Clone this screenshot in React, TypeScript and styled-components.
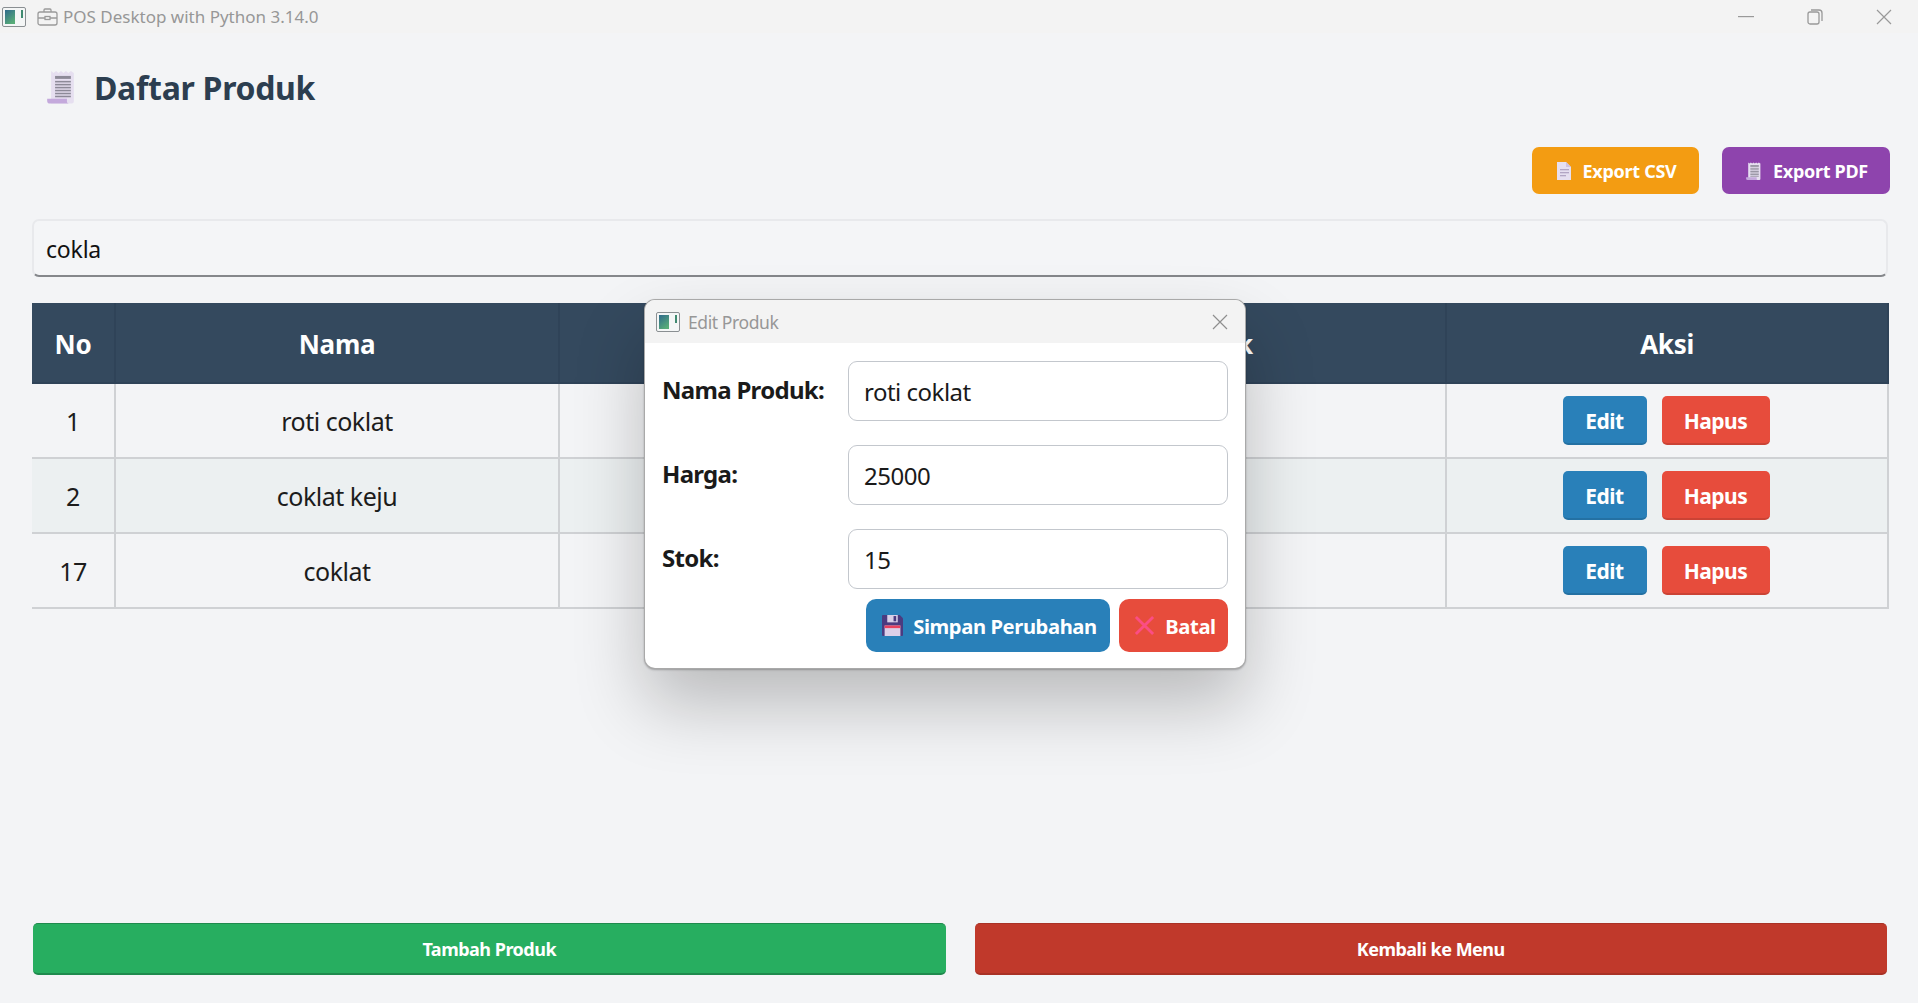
import styled, { createGlobalStyle } from 'styled-components'

const GlobalStyle = createGlobalStyle`
  html, body {
    margin: 0;
    padding: 0;
    background: #f3f4f6;
    overflow: hidden;
  }
  * {
    box-sizing: border-box;
  }
  body {
    font-family: 'Noto Sans', 'Open Sans', sans-serif;
  }
`

const products = [
  { no: 1, name: 'roti coklat', price: '25000', stock: '15' },
  { no: 2, name: 'coklat keju', price: '', stock: '' },
  { no: 17, name: 'coklat', price: '', stock: '' },
]

const fields = [
  { label: 'Nama Produk:', value: 'roti coklat' },
  { label: 'Harga:', value: '25000' },
  { label: 'Stok:', value: '15' },
]

const AppIcon = () => (
  <svg width="24" height="20" viewBox="0 0 24 20">
    <rect x="0.5" y="0.5" width="23" height="19" rx="1.5" fill="#f4f6f6" stroke="#8a8f92" />
    <defs>
      <linearGradient id="appfill" x1="0" y1="0" x2="0.6" y2="1">
        <stop offset="0" stopColor="#2f6a8c" />
        <stop offset="1" stopColor="#58ac78" />
      </linearGradient>
    </defs>
    <rect x="3" y="3" width="10" height="14" fill="url(#appfill)" />
    <rect x="19" y="3" width="2" height="8" fill="#3f8a70" />
  </svg>
)

const BriefcaseIcon = () => (
  <svg width="21" height="18" viewBox="0 0 21 18" fill="none" stroke="#9a9a9a" strokeWidth="1.3">
    <rect x="1" y="4" width="19" height="13" rx="2" />
    <path d="M7 4V2a1 1 0 0 1 1-1h5a1 1 0 0 1 1 1v2" />
    <path d="M1 10h7M13 10h7" />
    <rect x="8" y="8.5" width="5" height="3" />
  </svg>
)

const ScrollIcon = ({ size }: { size: number }) => (
  <svg width={size} height={size * 1.2} viewBox="0 0 28 34">
    <path
      d="M4 1l2.5 2L9 1l2.5 2L14 1l2.5 2L19 1l2.5 2L24 1l3 2v29a2 2 0 0 1-2 2H4z"
      fill="#e6dff0"
    />
    <path d="M0 29h20v3a2 2 0 0 0 2 2H3a3 3 0 0 1-3-3z" fill="#c4a9dc" />
    <g fill="#8d8a98">
      <rect x="8" y="6" width="16" height="3" />
      <rect x="8" y="11" width="16" height="1.6" />
      <rect x="8" y="14" width="16" height="1.6" />
      <rect x="8" y="17" width="16" height="1.6" />
      <rect x="8" y="20" width="16" height="1.6" />
      <rect x="8" y="23" width="16" height="1.6" />
      <rect x="8" y="26" width="16" height="1.6" />
    </g>
  </svg>
)

const PageIcon = () => (
  <svg width="14" height="18" viewBox="0 0 14 18">
    <path d="M0 0h9l5 5v13H0z" fill="#e6dff0" />
    <path d="M9 0l5 5H9z" fill="#cfc2e0" />
    <g fill="#b3a6c4">
      <rect x="3" y="7" width="9" height="1.3" />
      <rect x="3" y="10" width="9" height="1.3" />
      <rect x="3" y="13" width="6" height="1.3" />
    </g>
  </svg>
)

const FloppyIcon = () => (
  <svg width="21" height="21" viewBox="0 0 20 20">
    <path d="M0 1a1 1 0 0 1 1-1h16l3 3v16a1 1 0 0 1-1 1H1a1 1 0 0 1-1-1z" fill="#4b3b80" />
    <rect x="5" y="0" width="10" height="7" fill="#d8d0e8" />
    <rect x="11" y="1" width="2.5" height="5" fill="#4b3b80" />
    <rect x="2.5" y="10" width="15" height="10" fill="#dccfe8" />
    <rect x="2.5" y="10" width="15" height="2.5" fill="#e8415f" />
  </svg>
)

const CrossIcon = () => (
  <svg width="21" height="21" viewBox="0 0 22 22" fill="none" stroke="#fb4d85" strokeWidth="3">
    <path d="M2 2l18 18M20 2L2 20" />
  </svg>
)

const Window = styled.div`
  position: relative;
  display: flex;
  flex-direction: column;
  width: 100%;
  height: 100vh;
  background: #f3f4f6;
`

const TitleBar = styled.header`
  display: flex;
  align-items: center;
  flex-shrink: 0;
  height: 33px;
  padding-left: 2px;
  background: #f3f3f3;
`

const TitleText = styled.span`
  margin-left: 5px;
  font-size: 17px;
  color: #979797;
`

const IconGap = styled.span`
  display: inline-flex;
  margin-left: 11px;
`

const WindowControls = styled.div`
  display: flex;
  align-items: center;
  margin-left: auto;
  padding-right: 26px;
  gap: 53px;
`

const Content = styled.main`
  display: flex;
  flex: 1;
  flex-direction: column;
  padding: 0 28px 28px 32px;
`

const Heading = styled.div`
  display: flex;
  align-items: center;
  height: 66px;
  margin-top: 21px;
  padding-left: 15px;
  gap: 19px;
`

const HeadingText = styled.h1`
  margin: 0;
  font-size: 32px;
  font-weight: 700;
  letter-spacing: -0.3px;
  color: #2c3e50;
`

const ExportBar = styled.div`
  display: flex;
  justify-content: flex-end;
  margin-top: 27px;
  gap: 23px;
`

const ExportButton = styled.button<{ $bg: string; $width: number }>`
  display: flex;
  align-items: center;
  justify-content: center;
  width: ${p => p.$width}px;
  height: 47px;
  padding-left: 8px;
  border: 0;
  border-radius: 7px;
  background: ${p => p.$bg};
  gap: 12px;
  font-family: inherit;
  font-size: 18px;
  font-weight: 700;
  letter-spacing: -0.3px;
  color: #fff;
`

const SearchInput = styled.input`
  display: block;
  width: calc(100% - 2px);
  height: 58px;
  margin-top: 25px;
  padding: 2px 12px 0;
  border: 2px solid #e8e9ec;
  border-bottom-color: #85878b;
  border-radius: 7px;
  background: #f4f5f7;
  outline: none;
  font-family: inherit;
  font-size: 23px;
  letter-spacing: -0.2px;
  color: #111;
`

const Table = styled.table`
  width: calc(100% - 2px);
  margin-top: 26px;
  border-collapse: collapse;
  table-layout: fixed;
`

const HeadCell = styled.th`
  height: 80px;
  padding: 2px 0 0;
  border: 2px solid #2f4358;
  border-width: 0 2px 2px 0;
  background: #34495e;
  font-size: 26px;
  font-weight: 700;
  letter-spacing: -0.3px;
  color: #fff;
`

const BodyRow = styled.tr<{ $striped: boolean }>`
  height: 75px;
  background: ${p => (p.$striped ? '#ecf0f1' : 'transparent')};
`

const BodyCell = styled.td`
  padding: 0;
  border-bottom: 2px solid #cfd1d4;
  border-right: 2px solid #cfd1d4;
  text-align: center;
  font-size: 25px;
  letter-spacing: -0.5px;
  color: #1c1c1c;
`

const ActionCell = styled(BodyCell)`
  border-left: 1px solid #cfd1d4;
`

const RowActions = styled.div`
  display: flex;
  justify-content: center;
  margin-right: 2px;
  gap: 15px;
`

const RowButton = styled.button<{ $bg: string; $edge: string; $width: number }>`
  width: ${p => p.$width}px;
  height: 49px;
  padding: 2px 0 0;
  border: 0;
  border-bottom: 2px solid ${p => p.$edge};
  border-radius: 5px;
  background: ${p => p.$bg};
  font-family: inherit;
  font-size: 21px;
  font-weight: 700;
  letter-spacing: -0.5px;
  color: #fff;
`

const FooterBar = styled.div`
  display: grid;
  grid-template-columns: 1fr 1fr;
  margin-top: auto;
  padding: 0 3px 0 1px;
  gap: 29px;
`

const FooterButton = styled.button<{ $bg: string; $edge: string }>`
  height: 52px;
  border: 0;
  border-top: 1px solid ${p => p.$edge};
  border-bottom: 2px solid ${p => p.$edge};
  border-radius: 5px;
  background: ${p => p.$bg};
  font-family: inherit;
  font-size: 18px;
  font-weight: 700;
  letter-spacing: -0.5px;
  color: #fff;
`

const Dialog = styled.section`
  position: absolute;
  top: 300px;
  left: 645px;
  display: flex;
  flex-direction: column;
  width: 600px;
  height: 368px;
  overflow: hidden;
  border-radius: 10px;
  background: #fff;
  box-shadow:
    0 0 0 1px #a9a9a9,
    0 1px 2px 1px rgba(0, 0, 0, 0.25),
    0 36px 70px rgba(0, 0, 0, 0.24);
`

const DialogTitle = styled.header`
  display: flex;
  align-items: center;
  flex-shrink: 0;
  height: 43px;
  padding: 0 17px 0 11px;
  background: #f3f3f3;
  gap: 8px;
  font-size: 17.5px;
  letter-spacing: -0.4px;
  color: #979797;
`

const DialogClose = styled.span`
  display: inline-flex;
  margin-left: auto;
`

const DialogBody = styled.div`
  display: flex;
  flex-direction: column;
  padding: 18px 17px 0 17px;
  gap: 24px;
`

const FieldRow = styled.label`
  display: grid;
  grid-template-columns: 186px 1fr;
  align-items: center;
`

const FieldLabel = styled.span`
  margin-top: -3px;
  font-size: 24px;
  font-weight: 700;
  letter-spacing: -0.7px;
  color: #1a1a1a;
`

const FieldInput = styled.input`
  width: 100%;
  height: 60px;
  padding: 0 15px;
  border: 1.5px solid #c3c7cd;
  border-radius: 9px;
  background: #fff;
  outline: none;
  font-family: inherit;
  font-size: 24px;
  letter-spacing: -0.5px;
  color: #1a1a1a;
`

const DialogActions = styled.div`
  display: flex;
  justify-content: flex-end;
  margin-top: -14px;
  gap: 9px;
`

const DialogButton = styled.button<{ $bg: string; $width: number }>`
  display: flex;
  align-items: center;
  justify-content: center;
  width: ${p => p.$width}px;
  height: 53px;
  padding: 0 0 0 3px;
  border: 0;
  border-radius: 10px;
  background: ${p => p.$bg};
  gap: 10px;
  font-family: inherit;
  font-size: 20.2px;
  font-weight: 700;
  letter-spacing: -0.4px;
  color: #fff;
`

const columns = [
  { title: 'No', width: 83 },
  { title: 'Nama', width: 444 },
  { title: 'Harga', width: 444 },
  { title: 'Stok', width: 443 },
  { title: 'Aksi', width: 442 },
]

const App = () => {
  return (
    <Window>
      <GlobalStyle />
      <TitleBar>
        <AppIcon />
        <IconGap>
          <BriefcaseIcon />
        </IconGap>
        <TitleText>POS Desktop with Python 3.14.0</TitleText>
        <WindowControls>
          <svg width="16" height="2" viewBox="0 0 16 2">
            <rect width="16" height="1.2" fill="#999" />
          </svg>
          <svg width="16" height="16" viewBox="0 0 16 16" fill="none" stroke="#999" strokeWidth="1.3">
            <rect x="1" y="3" width="11" height="12" rx="2" />
            <path d="M4 1h8a3 3 0 0 1 3 3v8" />
          </svg>
          <svg width="16" height="16" viewBox="0 0 16 16" fill="none" stroke="#999" strokeWidth="1.2">
            <path d="M1 1l14 14M15 1L1 15" />
          </svg>
        </WindowControls>
      </TitleBar>

      <Content>
        <Heading>
          <ScrollIcon size={28} />
          <HeadingText>Daftar Produk</HeadingText>
        </Heading>

        <ExportBar>
          <ExportButton $bg="#f39c12" $width={167}>
            <PageIcon />
            Export CSV
          </ExportButton>
          <ExportButton $bg="#8e44ad" $width={168}>
            <ScrollIcon size={15} />
            Export PDF
          </ExportButton>
        </ExportBar>

        <SearchInput defaultValue="cokla" />

        <Table>
          <colgroup>
            {columns.map(col => (
              <col key={col.title} style={{ width: col.width }} />
            ))}
          </colgroup>
          <thead>
            <tr>
              {columns.map(col => (
                <HeadCell key={col.title}>{col.title}</HeadCell>
              ))}
            </tr>
          </thead>
          <tbody>
            {products.map((item, index) => (
              <BodyRow key={item.no} $striped={index % 2 === 1}>
                <BodyCell>{item.no}</BodyCell>
                <BodyCell>{item.name}</BodyCell>
                <BodyCell>{item.price}</BodyCell>
                <BodyCell>{item.stock}</BodyCell>
                <ActionCell>
                  <RowActions>
                    <RowButton $bg="#2980b9" $edge="#2471a3" $width={84}>
                      Edit
                    </RowButton>
                    <RowButton $bg="#e74c3c" $edge="#cb4335" $width={108}>
                      Hapus
                    </RowButton>
                  </RowActions>
                </ActionCell>
              </BodyRow>
            ))}
          </tbody>
        </Table>

        <FooterBar>
          <FooterButton $bg="#27ae60" $edge="#1f8a4d">
            Tambah Produk
          </FooterButton>
          <FooterButton $bg="#c0392b" $edge="#a93226">
            Kembali ke Menu
          </FooterButton>
        </FooterBar>
      </Content>

      <Dialog>
        <DialogTitle>
          <AppIcon />
          Edit Produk
          <DialogClose>
            <svg width="16" height="16" viewBox="0 0 16 16" fill="none" stroke="#8e8e8e" strokeWidth="1.2">
              <path d="M1 1l14 14M15 1L1 15" />
            </svg>
          </DialogClose>
        </DialogTitle>
        <DialogBody>
          {fields.map(field => (
            <FieldRow key={field.label}>
              <FieldLabel>{field.label}</FieldLabel>
              <FieldInput defaultValue={field.value} />
            </FieldRow>
          ))}
          <DialogActions>
            <DialogButton $bg="#2980b9" $width={244}>
              <FloppyIcon />
              Simpan Perubahan
            </DialogButton>
            <DialogButton $bg="#e74c3c" $width={109}>
              <CrossIcon />
              Batal
            </DialogButton>
          </DialogActions>
        </DialogBody>
      </Dialog>
    </Window>
  )
}

export default App
